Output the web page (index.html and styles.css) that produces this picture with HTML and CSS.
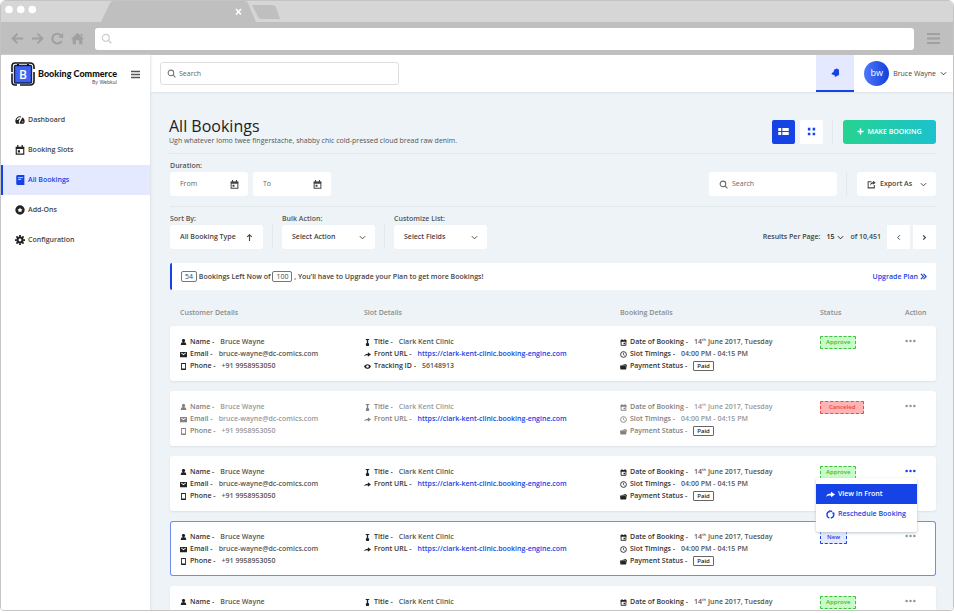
FILE: index.html
```html
<!DOCTYPE html>
<html lang="en">
<head>
    <meta charset="UTF-8">
    <meta name="viewport" content="width=device-width, initial-scale=1">
    <title>All Bookings</title>
    <link rel="stylesheet" href="styles.css">
</head>
<body>
    <!-- Icon set -->
    <svg class="sprite" aria-hidden="true">
        <symbol id="i-search" viewBox="0 0 16 16"><circle cx="7" cy="7" r="5" fill="none" stroke="currentColor" stroke-width="1.8"/><path d="M11 11l4 4" stroke="currentColor" stroke-width="2"/></symbol>
        <symbol id="i-down" viewBox="0 0 16 16"><path d="M2 5l6 6 6-6" fill="none" stroke="currentColor" stroke-width="2.2"/></symbol>
        <symbol id="i-left" viewBox="0 0 16 16"><path d="M11 3L6 8l5 5" fill="none" stroke="currentColor" stroke-width="2.2"/></symbol>
        <symbol id="i-right" viewBox="0 0 16 16"><path d="M5 3l5 5-5 5" fill="none" stroke="currentColor" stroke-width="2.8"/></symbol>
        <symbol id="i-double" viewBox="0 0 16 16"><path d="M2 2l6 6-6 6M8 2l6 6-6 6" fill="none" stroke="currentColor" stroke-width="2.6"/></symbol>
        <symbol id="i-up" viewBox="0 0 16 16"><path d="M8 14V3M4 7l4-4 4 4" fill="none" stroke="currentColor" stroke-width="2"/></symbol>
        <symbol id="i-back" viewBox="0 0 16 16"><path d="M15 8H2M8 2L2 8l6 6" fill="none" stroke="currentColor" stroke-width="2.4"/></symbol>
        <symbol id="i-next" viewBox="0 0 16 16"><path d="M1 8h13M8 2l6 6-6 6" fill="none" stroke="currentColor" stroke-width="2.4"/></symbol>
        <symbol id="i-reload" viewBox="0 0 16 16"><path d="M13 11a6 6 0 1 1-1-7" fill="none" stroke="currentColor" stroke-width="2.6"/><path d="M15 1v6H9z" fill="currentColor"/></symbol>
        <symbol id="i-home" viewBox="0 0 16 16"><path d="M8 1l8 8h-2v6h-4v-5H6v5H2V9H0zM12 2h2v4l-2-2z" fill="currentColor"/></symbol>
        <symbol id="i-burger" viewBox="0 0 16 16"><path d="M0 2.500h16M0 8h16M0 13.500h16" stroke="currentColor" stroke-width="2.6"/></symbol>
        <symbol id="i-gauge" viewBox="0 0 16 16"><path d="M2 14a8 8 0 0 1 0-9 7.500 7.500 0 0 1 8-2.800L9 4a5 5 0 0 0-5 1L2.500 8H5l1-2h2l-2 4 1 4zM12 3.500a8 8 0 0 1 2 10.500H8.500a2 2 0 0 1-.5-3zM12.500 9l-1 2.500h2z" fill="currentColor" fill-rule="evenodd"/></symbol>
        <symbol id="i-cal" viewBox="0 0 16 16"><path d="M2 3.500h12v11H2z" fill="none" stroke="currentColor" stroke-width="1.8"/><path d="M1.500 3h13v3.500h-13zM3.500 0h2v4h-2zM10.500 0h2v4h-2zM4.500 8.500H8V12H4.500z" fill="currentColor"/></symbol>
        <symbol id="i-date" viewBox="0 0 16 16"><path d="M2.500 3.500h11v11h-11z" fill="none" stroke="currentColor" stroke-width="2"/><path d="M1.500 2.500h13V6h-13zM3.500 0h2v3h-2zM10.500 0h2v3h-2zM8 8.500h3.500V12H8z" fill="currentColor"/></symbol>
        <symbol id="i-book" viewBox="0 0 16 16"><path d="M3.500 0H15v16H3.500A2 2 0 0 1 2 14V2a2 2 0 0 1 1.500-2zM5 3v1.500h8V3zM5 6v1.500h5V6z" fill="currentColor" fill-rule="evenodd"/></symbol>
        <symbol id="i-addon" viewBox="0 0 16 16"><path d="M8 .5a7.500 7.500 0 1 0 0 15 7.500 7.500 0 0 0 0-15zM8 4l1.300 2.300L12 7l-1.800 2 .3 2.700L8 10.500l-2.500 1.200.3-2.700L4 7l2.700-.7z" fill="currentColor" fill-rule="evenodd"/></symbol>
        <symbol id="i-gear" viewBox="0 0 16 16"><circle cx="8" cy="8" r="4" fill="none" stroke="currentColor" stroke-width="3.4"/><path d="M8 0v3M8 13v3M0 8h3M13 8h3M2.300 2.300l2.200 2.200M11.500 11.500l2.200 2.200M13.700 2.300l-2.200 2.200M2.300 13.700l2.200-2.200" stroke="currentColor" stroke-width="2.8"/></symbol>
        <symbol id="i-bell" viewBox="0 0 16 16"><path d="M10 1l4 1.500.5 9-1.500 2-3 .5-1 1.500-2.500-.5V13l-5.500-2 .5-2 3-2 1-4z" fill="currentColor"/></symbol>
        <symbol id="i-list" viewBox="0 0 18 12"><path d="M0 0h5v5H0zM7 0h11v5H7zM0 7h5v5H0zM7 7h11v5H7z" fill="currentColor"/></symbol>
        <symbol id="i-grid" viewBox="0 0 16 16"><path d="M1.500 1.500H6V6H1.500zM10 1.500h4.500V6H10zM1.500 10H6v4.500H1.500zM10 10h4.500v4.500H10z" fill="currentColor"/></symbol>
        <symbol id="i-plus" viewBox="0 0 16 16"><path d="M8 1v14M1 8h14" stroke="currentColor" stroke-width="3.4"/></symbol>
        <symbol id="i-export" viewBox="0 0 16 16"><path d="M8 3H2v11h11V9" fill="none" stroke="currentColor" stroke-width="1.8"/><path d="M5.500 10c0-4 2-6 5-6V1.500L15.500 5l-5 3.500V6.500C8.500 6.500 7 7.500 5.500 10z" fill="currentColor"/></symbol>
        <symbol id="i-user" viewBox="0 0 16 16"><path d="M8 0a3.500 3.500 0 0 1 2 6.500V8h3l1.500 5.500h-13L3 8h3V6.500A3.500 3.500 0 0 1 8 0z" fill="currentColor"/></symbol>
        <symbol id="i-mail" viewBox="0 0 16 16"><path d="M0 2h16v12H0zM2.500 5L8 9.500 13.500 5V3.500L8 7 2.500 3.500z" fill="currentColor" fill-rule="evenodd"/></symbol>
        <symbol id="i-phone" viewBox="0 0 16 16"><path d="M2.500 0h11v16h-11zM4.500 2.500v10h7v-10z" fill="currentColor" fill-rule="evenodd"/></symbol>
        <symbol id="i-title" viewBox="0 0 16 16"><path d="M4 0h8v2.500H9.500v6l2.500 3-1 4.500H5l-1-4.500 2.500-3v-6H4z" fill="currentColor"/></symbol>
        <symbol id="i-share" viewBox="0 0 16 16"><path d="M0 12c1-4 4-6 9-6V3l7 5-7 5v-3c-4-.5-6 0-9 2z" fill="currentColor"/></symbol>
        <symbol id="i-eye" viewBox="0 0 16 16"><path d="M0 8c4-7 12-7 16 0-4 7-12 7-16 0zm8-3a3 3 0 1 0 0 6 3 3 0 0 0 0-6z" fill="currentColor" fill-rule="evenodd"/></symbol>
        <symbol id="i-clock" viewBox="0 0 16 16"><circle cx="8" cy="8" r="6.600" fill="none" stroke="currentColor" stroke-width="2"/><path d="M8 4v4.500l2.500 1.500" fill="none" stroke="currentColor" stroke-width="1.6"/></symbol>
        <symbol id="i-wallet" viewBox="0 0 16 16"><path d="M0 6l3-1 10-3 1 2h2l-2 10-1 1H1z" fill="currentColor"/><path d="M2 6.500l12-1M12 9h3" stroke="#fff" stroke-width=".8"/></symbol>
        <symbol id="i-redo" viewBox="0 0 16 16"><path d="M6 2.500A6 6 0 0 0 6 14M8.500 14.200A6 6 0 0 0 13 5M9 2.200l2 .8" fill="none" stroke="currentColor" stroke-width="2.400"/><path d="M5 0l5 1.500L6.500 5zM15.500 5l-4.500-1 1 4z" fill="currentColor"/></symbol>
        <symbol id="i-dots" viewBox="0 0 20 6"><circle cx="3" cy="3" r="2.300" fill="currentColor"/><circle cx="10" cy="3" r="2.300" fill="currentColor"/><circle cx="17" cy="3" r="2.300" fill="currentColor"/></symbol>
    </svg>

    <div class="browser">
        <div class="tabs">
            <svg width="290" height="21" viewBox="1 1 290 21" aria-hidden="true">
                <path d="M101 22l9-19q1-2 4-2h130q3 0 4 2l8 19z" fill="#bfbfbf"/>
                <path d="M252 5h20q3 0 4 2l4 12h-18q-3 0-4-2z" fill="#bfbfbf"/>
                <circle cx="9" cy="9.500" r="3.800" fill="#fff"/>
                <circle cx="20.700" cy="9.500" r="3.800" fill="#fff"/>
                <circle cx="32.300" cy="9.500" r="3.800" fill="#fff"/>
                <path d="M236 9l5 5.500M241 9l-5 5.500" stroke="#fff" stroke-width="1.500"/>
            </svg>
        </div>
        <div class="toolbar">
            <svg class="icon"><use href="#i-back"/></svg>
            <svg class="icon"><use href="#i-next"/></svg>
            <svg class="icon"><use href="#i-reload"/></svg>
            <svg class="icon"><use href="#i-home"/></svg>
            <label class="address">
                <svg class="icon"><use href="#i-search"/></svg>
                <input type="text" aria-label="Address">
            </label>
            <svg class="icon"><use href="#i-burger"/></svg>
        </div>

        <div class="app">
            <aside class="sidebar">
                <div class="brand">
                    <svg class="logo" viewBox="0 0 24 24" aria-hidden="true">
                        <path d="M1 10V4q0-3 3-3h15q4 0 4 4v2M1 11.500v8q0 3.500 3 3.500h2M9 23h10q4 0 4-4v-9" fill="none" stroke="#15161c" stroke-width="1.600"/>
                        <rect x="3.500" y="3.500" width="17" height="17.500" rx="1" fill="#3e63f3" stroke="#15205c" stroke-width="1.400"/>
                        <path d="M7 2v2M17 2v2" stroke="#15161c" stroke-width="2"/>
                        <text x="12" y="16.500" text-anchor="middle" class="logo-letter">B</text>
                    </svg>
                    <div class="brand-name">
                        <strong>Booking Commerce</strong>
                        <span>By Webkul</span>
                    </div>
                    <button class="plain" aria-label="Toggle menu"><svg class="icon"><use href="#i-burger"/></svg></button>
                </div>
                <nav>
                    <a href="#"><svg class="icon"><use href="#i-gauge"/></svg>Dashboard</a>
                    <a href="#"><svg class="icon"><use href="#i-cal"/></svg>Booking Slots</a>
                    <a href="#" class="active"><svg class="icon"><use href="#i-book"/></svg>All Bookings</a>
                    <a href="#"><svg class="icon"><use href="#i-addon"/></svg>Add-Ons</a>
                    <a href="#"><svg class="icon"><use href="#i-gear"/></svg>Configuration</a>
                </nav>
            </aside>

            <div class="main">
                <header class="topbar">
                    <label class="top-search">
                        <svg class="icon"><use href="#i-search"/></svg>
                        <input type="text" placeholder="Search" aria-label="Search">
                    </label>
                    <button class="bell" aria-label="Notifications"><svg class="icon"><use href="#i-bell"/></svg></button>
                    <button class="plain profile">
                        <span class="avatar">bw</span>
                        Bruce Wayne
                        <svg class="chevron"><use href="#i-down"/></svg>
                    </button>
                </header>

                <main class="content">
                    <div class="page-head">
                        <div>
                            <h1>All Bookings</h1>
                            <p>Ugh whatever lomo twee fingerstache, shabby chic cold-pressed cloud bread raw denim.</p>
                        </div>
                        <div class="group">
                            <button class="square on" aria-label="List view"><svg class="list-icon"><use href="#i-list"/></svg></button>
                            <button class="square" aria-label="Grid view"><svg class="icon grid-icon"><use href="#i-grid"/></svg></button>
                            <span class="divider"></span>
                            <button class="make"><svg class="icon"><use href="#i-plus"/></svg>MAKE BOOKING</button>
                        </div>
                    </div>

                    <div class="filters duration">
                        <div class="field">
                            <label for="from">Duration:</label>
                            <div class="dates">
                                <div class="box date"><input type="text" id="from" placeholder="From"><svg class="icon"><use href="#i-cal"/></svg></div>
                                <div class="box date"><input type="text" placeholder="To" aria-label="To"><svg class="icon"><use href="#i-cal"/></svg></div>
                            </div>
                        </div>
                        <div class="group">
                            <label class="box find"><svg class="icon"><use href="#i-search"/></svg><input type="text" placeholder="Search" aria-label="Search bookings"></label>
                            <span class="divider"></span>
                            <button class="box export"><svg class="icon"><use href="#i-export"/></svg>Export As<svg class="chevron"><use href="#i-down"/></svg></button>
                        </div>
                    </div>

                    <div class="filters">
                        <div class="selects">
                            <div class="field">
                                <label for="sort">Sort By:</label>
                                <div class="box select"><select id="sort"><option>All Booking Type</option></select><svg class="icon"><use href="#i-up"/></svg></div>
                            </div>
                            <span class="divider"></span>
                            <div class="field">
                                <label for="bulk">Bulk Action:</label>
                                <div class="box select"><select id="bulk"><option>Select Action</option></select><svg class="chevron"><use href="#i-down"/></svg></div>
                            </div>
                            <span class="divider"></span>
                            <div class="field">
                                <label for="fields">Customize List:</label>
                                <div class="box select"><select id="fields"><option>Select Fields</option></select><svg class="chevron"><use href="#i-down"/></svg></div>
                            </div>
                        </div>
                        <div class="pager">
                            <label for="per-page">Results Per Page:</label>
                            <div class="per-page"><select id="per-page"><option>15</option></select><svg class="chevron"><use href="#i-down"/></svg></div>
                            <span>of 10,451</span>
                            <div class="pages">
                                <button class="square" aria-label="Previous page"><svg class="arrow"><use href="#i-left"/></svg></button>
                                <button class="square" aria-label="Next page"><svg class="arrow"><use href="#i-right"/></svg></button>
                            </div>
                        </div>
                    </div>

                    <div class="notice">
                        <p><span class="count">54</span> Bookings Left Now of <span class="count">100</span> , You’ll have to Upgrade your Plan to get more Bookings!</p>
                        <a href="#">Upgrade Plan <svg class="arrow"><use href="#i-double"/></svg></a>
                    </div>

                    <table class="bookings">
                        <thead>
                            <tr><th>Customer Details</th><th>Slot Details</th><th>Booking Details</th><th>Status</th><th>Action</th></tr>
                        </thead>
                        <tbody>
                            <tr>
                                <td>
                                    <div class="line"><svg><use href="#i-user"/></svg><b>Name -</b>Bruce Wayne</div>
                                    <div class="line"><svg><use href="#i-mail"/></svg><b>Email -</b>bruce-wayne@dc-comics.com</div>
                                    <div class="line"><svg><use href="#i-phone"/></svg><b>Phone -</b>+91 9958953050</div>
                                </td>
                                <td>
                                    <div class="line"><svg><use href="#i-title"/></svg><b>Title -</b>Clark Kent Clinic</div>
                                    <div class="line"><svg><use href="#i-share"/></svg><b>Front URL -</b><a href="#">https://clark-kent-clinic.booking-engine.com</a></div>
                                    <div class="line"><svg><use href="#i-eye"/></svg><b>Tracking ID -</b>56148913</div>
                                </td>
                                <td>
                                    <div class="line"><svg><use href="#i-date"/></svg><b>Date of Booking -</b><span>14<sup>th</sup> June 2017, Tuesday</span></div>
                                    <div class="line"><svg><use href="#i-clock"/></svg><b>Slot Timings -</b>04:00 PM - 04:15 PM</div>
                                    <div class="line"><svg><use href="#i-wallet"/></svg><b>Payment Status -</b><span class="paid">Paid</span></div>
                                </td>
                                <td><span class="badge approve">Approve</span></td>
                                <td><button class="plain more" aria-label="Actions"><svg><use href="#i-dots"/></svg></button></td>
                            </tr>
                            <tr class="faded">
                                <td>
                                    <div class="line"><svg><use href="#i-user"/></svg><b>Name -</b>Bruce Wayne</div>
                                    <div class="line"><svg><use href="#i-mail"/></svg><b>Email -</b>bruce-wayne@dc-comics.com</div>
                                    <div class="line"><svg><use href="#i-phone"/></svg><b>Phone -</b>+91 9958953050</div>
                                </td>
                                <td>
                                    <div class="line"><svg><use href="#i-title"/></svg><b>Title -</b>Clark Kent Clinic</div>
                                    <div class="line"><svg><use href="#i-share"/></svg><b>Front URL -</b><a href="#">https://clark-kent-clinic.booking-engine.com</a></div>
                                </td>
                                <td>
                                    <div class="line"><svg><use href="#i-date"/></svg><b>Date of Booking -</b><span>14<sup>th</sup> June 2017, Tuesday</span></div>
                                    <div class="line"><svg><use href="#i-clock"/></svg><b>Slot Timings -</b>04:00 PM - 04:15 PM</div>
                                    <div class="line"><svg><use href="#i-wallet"/></svg><b>Payment Status -</b><span class="paid">Paid</span></div>
                                </td>
                                <td><span class="badge canceled">Canceled</span></td>
                                <td><button class="plain more" aria-label="Actions"><svg><use href="#i-dots"/></svg></button></td>
                            </tr>
                            <tr>
                                <td>
                                    <div class="line"><svg><use href="#i-user"/></svg><b>Name -</b>Bruce Wayne</div>
                                    <div class="line"><svg><use href="#i-mail"/></svg><b>Email -</b>bruce-wayne@dc-comics.com</div>
                                    <div class="line"><svg><use href="#i-phone"/></svg><b>Phone -</b>+91 9958953050</div>
                                </td>
                                <td>
                                    <div class="line"><svg><use href="#i-title"/></svg><b>Title -</b>Clark Kent Clinic</div>
                                    <div class="line"><svg><use href="#i-share"/></svg><b>Front URL -</b><a href="#">https://clark-kent-clinic.booking-engine.com</a></div>
                                </td>
                                <td>
                                    <div class="line"><svg><use href="#i-date"/></svg><b>Date of Booking -</b><span>14<sup>th</sup> June 2017, Tuesday</span></div>
                                    <div class="line"><svg><use href="#i-clock"/></svg><b>Slot Timings -</b>04:00 PM - 04:15 PM</div>
                                    <div class="line"><svg><use href="#i-wallet"/></svg><b>Payment Status -</b><span class="paid">Paid</span></div>
                                </td>
                                <td><span class="badge approve">Approve</span></td>
                                <td>
                                    <button class="plain more open" aria-label="Actions"><svg><use href="#i-dots"/></svg></button>
                                    <div class="menu">
                                        <a href="#" class="hover"><svg><use href="#i-share"/></svg>View In Front</a>
                                        <a href="#"><svg><use href="#i-redo"/></svg>Reschedule Booking</a>
                                    </div>
                                </td>
                            </tr>
                            <tr class="selected">
                                <td>
                                    <div class="line"><svg><use href="#i-user"/></svg><b>Name -</b>Bruce Wayne</div>
                                    <div class="line"><svg><use href="#i-mail"/></svg><b>Email -</b>bruce-wayne@dc-comics.com</div>
                                    <div class="line"><svg><use href="#i-phone"/></svg><b>Phone -</b>+91 9958953050</div>
                                </td>
                                <td>
                                    <div class="line"><svg><use href="#i-title"/></svg><b>Title -</b>Clark Kent Clinic</div>
                                    <div class="line"><svg><use href="#i-share"/></svg><b>Front URL -</b><a href="#">https://clark-kent-clinic.booking-engine.com</a></div>
                                </td>
                                <td>
                                    <div class="line"><svg><use href="#i-date"/></svg><b>Date of Booking -</b><span>14<sup>th</sup> June 2017, Tuesday</span></div>
                                    <div class="line"><svg><use href="#i-clock"/></svg><b>Slot Timings -</b>04:00 PM - 04:15 PM</div>
                                    <div class="line"><svg><use href="#i-wallet"/></svg><b>Payment Status -</b><span class="paid">Paid</span></div>
                                </td>
                                <td><span class="badge new">New</span></td>
                                <td><button class="plain more" aria-label="Actions"><svg><use href="#i-dots"/></svg></button></td>
                            </tr>
                            <tr>
                                <td>
                                    <div class="line"><svg><use href="#i-user"/></svg><b>Name -</b>Bruce Wayne</div>
                                </td>
                                <td>
                                    <div class="line"><svg><use href="#i-title"/></svg><b>Title -</b>Clark Kent Clinic</div>
                                </td>
                                <td>
                                    <div class="line"><svg><use href="#i-date"/></svg><b>Date of Booking -</b><span>14<sup>th</sup> June 2017, Tuesday</span></div>
                                </td>
                                <td><span class="badge approve">Approve</span></td>
                                <td><button class="plain more" aria-label="Actions"><svg><use href="#i-dots"/></svg></button></td>
                            </tr>
                        </tbody>
                    </table>
                </main>
            </div>
        </div>
    </div>
</body>
</html>
```

FILE: styles.css
```css
* {
    box-sizing: border-box;
}

body {
    margin: 0;
    background: #fff;
    color: #444;
    font-family: "Open Sans", "Noto Sans", sans-serif;
    font-size: 7px;
    line-height: 12px;
}

h1, p {
    margin: 0;
    font-weight: inherit;
}

a {
    color: #1643e5;
    text-decoration: none;
}

input, select, button {
    padding: 0;
    border: 0;
    background: none;
    color: inherit;
    font: inherit;
    outline: none;
}

input {
    flex: 1;
    width: 100%;
    min-width: 0;
}

input::placeholder {
    color: #666;
    opacity: 1;
}

select {
    appearance: none;
    flex: 1;
    min-width: 0;
}

svg {
    flex: none;
}

.sprite {
    position: absolute;
    width: 0;
    height: 0;
}

.icon {
    width: 9px;
    height: 9px;
}

.chevron, .arrow {
    width: 7px;
    height: 7px;
}

/* Browser frame */
.browser {
    display: flex;
    flex-direction: column;
    height: calc(100vh - 2px);
    overflow: hidden;
    border: 1px solid #c4c4c4;
    border-radius: 6px 6px 4px 4px;
}

.tabs {
    height: 21px;
    background: #d6d6d6;
}

.tabs svg {
    display: block;
}

.toolbar {
    display: flex;
    align-items: center;
    gap: 7px;
    height: 33px;
    padding: 0 13px 0 10px;
    background: #bfbfbf;
    color: #a0a0a0;
}

.toolbar > .icon {
    width: 13px;
    height: 13px;
}

.address {
    display: flex;
    flex: 1;
    align-items: center;
    height: 22px;
    margin: 0 6px 0 4px;
    padding: 0 6px;
    border-radius: 3px;
    background: #fff;
    color: #ccc;
}

.address .icon {
    width: 11px;
    height: 11px;
}

.app {
    display: flex;
    flex: 1;
    min-height: 0;
}

/* Sidebar */
.sidebar {
    z-index: 2;
    width: 149px;
    flex: none;
    background: #fff;
    box-shadow: 1px 0 2px #dde2e6;
}

.brand {
    display: flex;
    align-items: center;
    height: 38px;
    padding: 0 10px;
    margin-bottom: 12px;
}

.brand .plain {
    margin-left: auto;
    color: #555;
}

.logo {
    width: 24px;
    height: 24px;
    margin-right: 3px;
}

.logo-letter {
    fill: #fff;
    font-size: 12px;
    font-weight: 600;
}

.brand-name {
    display: flex;
    flex-direction: column;
    align-items: flex-end;
    padding-top: 8px;
    color: #111;
    line-height: 8px;
}

.brand-name strong {
    font-family: Lato, sans-serif;
    font-size: 9px;
    font-weight: 900;
}

.brand-name span {
    color: #555;
    font-family: Inter, sans-serif;
    font-size: 5px;
}

.plain {
    display: flex;
    align-items: center;
}

nav a {
    display: flex;
    align-items: center;
    gap: 3px;
    height: 30px;
    padding-left: 12px;
    border-left: 2px solid transparent;
    color: #444;
    font-weight: 600;
}

nav .icon {
    width: 10px;
    height: 10px;
    color: #222;
}

nav .active {
    border-color: #1643e5;
    background: #e4e9ff;
}

nav .active, nav .active .icon {
    color: #1643e5;
}

/* Top bar */
.main {
    display: flex;
    flex: 1;
    flex-direction: column;
    min-width: 0;
    background: #edf3f6;
}

.topbar {
    display: flex;
    flex: none;
    align-items: center;
    height: 37px;
    padding: 0 6px 0 10px;
    background: #fff;
    box-shadow: 0 1px 2px #dde2e6;
}

.top-search {
    display: flex;
    align-items: center;
    gap: 3px;
    width: 239px;
    height: 23px;
    padding: 0 6px;
    border: 1px solid #dedede;
    border-radius: 3px;
    color: #777;
}

.bell {
    display: flex;
    align-items: center;
    align-self: stretch;
    justify-content: center;
    width: 38px;
    margin-left: auto;
    border-bottom: 2px solid #1643e5;
    background: #e4e9ff;
    color: #1643e5;
}

.profile {
    gap: 4px;
    margin-left: 10px;
    font-weight: 500;
}

.avatar {
    width: 25px;
    height: 25px;
    border-radius: 50%;
    background: linear-gradient(90deg, #5078fa, #1240dc);
    color: #fff;
    font-size: 9px;
    line-height: 24px;
}

/* Page content */
.content {
    padding: 25px 17px 0 19px;
}

.page-head {
    display: flex;
    align-items: center;
    justify-content: space-between;
    height: 37px;
    border-bottom: 1px solid #e3e8eb;
    padding-bottom: 7px;
}

h1 {
    color: #222;
    font-size: 16px;
    line-height: 18px;
}

.page-head p {
    color: #555;
}

.group {
    display: flex;
    align-items: center;
    gap: 5px;
}

.divider {
    width: 1px;
    height: 24px;
    margin: 0 4px;
    background: #e1e7ea;
}

.group .divider {
    margin: 0 5px 0 4px;
}

.square {
    display: flex;
    align-items: center;
    justify-content: center;
    width: 23px;
    height: 24px;
    border-radius: 2px;
    background: #fff;
}

.square.on {
    background: #1643e5;
    color: #fff;
}

.list-icon {
    width: 11px;
    height: 7px;
}

.grid-icon {
    color: #1643e5;
}

.make {
    display: flex;
    align-items: center;
    justify-content: center;
    gap: 3px;
    width: 93px;
    height: 24px;
    border-radius: 3px;
    background: linear-gradient(90deg, #26d391, #1bc1cd);
    color: #fff;
    font-weight: 600;
}

.make .icon {
    width: 7px;
    height: 7px;
}

.filters, .notice, .bookings {
    margin-left: 1px;
}

.filters {
    display: flex;
    align-items: flex-end;
    justify-content: space-between;
    padding-top: 6px;
}

.duration {
    padding-bottom: 10px;
    border-bottom: 1px solid #e3e8eb;
}

.field label {
    display: block;
    font-weight: 600;
    color: #555;
}

.dates {
    display: flex;
    gap: 5px;
}

.box {
    display: flex;
    align-items: center;
    height: 24px;
    padding: 0 9px 0 10px;
    border-radius: 3px;
    background: #fff;
}

.date {
    width: 78px;
    color: #444;
}

.find {
    gap: 4px;
    width: 128px;
    color: #666;
}

.export {
    gap: 4px;
    width: 79px;
    font-weight: 600;
}

.export .chevron {
    margin-left: auto;
}

.selects {
    display: flex;
    align-items: flex-end;
    gap: 5px;
}

.select {
    width: 93px;
    color: #444;
    font-weight: 600;
}

.pager {
    display: flex;
    align-items: center;
    gap: 6px;
    font-weight: 600;
}

.per-page {
    display: flex;
    align-items: center;
    gap: 2px;
    color: #222;
}

.pages {
    display: flex;
    gap: 3px;
}

.pages .square {
    border-radius: 0;
}

.notice {
    display: flex;
    align-items: center;
    justify-content: space-between;
    height: 27px;
    margin-top: 14px;
    padding: 0 9px;
    border-left: 2px solid #1643e5;
    border-radius: 2px;
    background: #fff;
    font-weight: 600;
}

.count {
    padding: 0 3px;
    border: 1px solid #777;
    border-radius: 2px;
    font-weight: 500;
}

.notice a {
    display: flex;
    align-items: center;
    gap: 2px;
}

/* Bookings list */
.bookings, .bookings thead, .bookings tbody {
    display: block;
}

.bookings tr {
    display: grid;
    grid-template-columns: 184fr 256fr 200fr 85fr 21fr;
    height: 55px;
    margin-bottom: 10px;
    padding: 10px 10px 0;
    border-radius: 3px;
    background: #fff;
    box-shadow: 0 1px 2px #dce2e6;
}

.bookings thead tr {
    height: auto;
    margin: 0;
    padding: 17px 10px 7px;
    background: none;
    box-shadow: none;
}

.bookings .selected {
    box-shadow: inset 0 0 0 1px #6f8df0;
}

th, td {
    min-width: 0;
    padding: 0;
    text-align: left;
    white-space: nowrap;
}

th {
    color: #8c8c8c;
    font-weight: 600;
}

td {
    position: relative;
}

.line {
    display: flex;
    align-items: center;
    gap: 6px;
    height: 12px;
    color: #555;
    font-weight: 600;
}

.line svg {
    width: 7px;
    height: 7px;
    margin-right: -3px;
    color: #222;
}

.line b {
    color: #333;
    font-weight: 600;
}

sup {
    font-size: 4px;
    line-height: 0;
}

.faded .line {
    color: #999;
}

.faded .line b, .faded .line svg {
    color: #808080;
}

.line .paid {
    padding: 0 3px;
    border: 1px solid #666;
    border-radius: 1px;
    color: #222;
    font-size: 6px;
    line-height: 8px;
}

.badge {
    display: inline-block;
    padding: 0 5px;
    border: 1px dashed;
    border-radius: 1px;
    font-size: 6px;
    font-weight: 600;
    line-height: 11px;
    vertical-align: top;
}

.approve {
    border-color: #3fc13f;
    background: #c9fbc9;
    color: #3fb93f;
}

.canceled {
    padding: 0 8px;
    border-color: #f04848;
    background: #ffb3b3;
    color: #ee4444;
}

.new {
    padding: 0 6px;
    border-color: #1643e5;
    background: #e4e9ff;
    color: #1643e5;
}

.more {
    height: 10px;
    color: #8b989f;
}

.more svg {
    width: 11px;
    height: 4px;
}

.more.open {
    color: #1643e5;
}

.menu {
    position: absolute;
    z-index: 1;
    top: 12px;
    right: 9px;
    width: 101px;
    padding: 6px 0 8px;
    border-radius: 2px;
    background: #fff;
    box-shadow: 0 1px 3px #bcc4ca;
}

.menu a {
    display: flex;
    align-items: center;
    gap: 3px;
    height: 20px;
    padding-left: 10px;
    font-weight: 600;
}

.menu svg {
    width: 9px;
    height: 9px;
}

.menu .hover {
    background: #1643e5;
    color: #fff;
}
```
